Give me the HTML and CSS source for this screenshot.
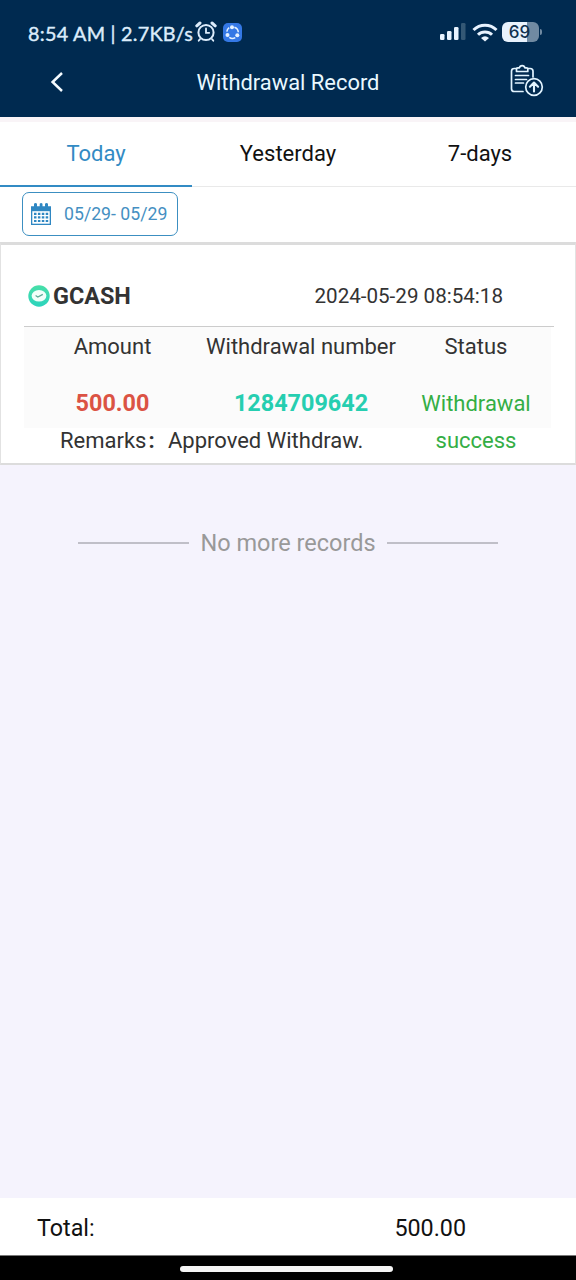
FILE: index.html
```html
<!DOCTYPE html>
<html lang="en">
<head>
<meta charset="utf-8">
<title>Withdrawal Record</title>
<link rel="stylesheet" href="styles.css">
</head>
<body>
<div class="screen">
  <header class="top">
    <div class="status-bar">
      <span class="clock">8:54 AM | 2.7KB/s</span>
      <svg class="alarm" width="22" height="22" viewBox="0 0 22 22" fill="none" stroke="#dcecfb" stroke-linecap="round">
        <circle cx="11" cy="11.5" r="7.6" stroke-width="2"/>
        <path d="M11 7.5v4.3h3.2" stroke-width="1.8"/>
        <path d="M1.8 4.8 5 2M20.2 4.8 17 2" stroke-width="3"/>
        <path d="M5 18.2l-1.3 1.5M17 18.2l1.3 1.5" stroke-width="1.8"/>
      </svg>
      <svg class="share" width="19" height="19" viewBox="0 0 19 19">
        <rect width="19" height="19" rx="5" fill="#3478e5"/>
        <g fill="none" stroke="#e4f1ff" stroke-width="1.5"><path d="M6.2 4.7a5.7 5.7 0 0 0-2.4 4M11.4 4.2a5.7 5.7 0 0 1 3.9 5M6.3 14.4a5.7 5.7 0 0 0 6 .2"/></g>
        <g fill="#e4f1ff"><circle cx="9" cy="4.3" r="2"/><circle cx="4.5" cy="11.9" r="2"/><circle cx="14.3" cy="12.2" r="2"/></g>
      </svg>
      <span class="spacer"></span>
      <svg class="signal" width="26" height="18" viewBox="0 0 26 18" fill="#e8f3ff">
        <rect x="0" y="11" width="4.5" height="6" rx="1.3"/><rect x="7" y="8" width="4.5" height="9" rx="1.3"/><rect x="14" y="4" width="4.5" height="13" rx="1.3"/><rect x="21" y="0" width="4.5" height="17" rx="1.3" fill="#345875"/>
      </svg>
      <svg class="wifi" width="26" height="19" viewBox="0 0 26 19" fill="none" stroke="#e8f3ff" stroke-width="3">
        <path d="M1.5 7A16.3 16.3 0 0 1 24.5 7"/><path d="M6 11.8a10 10 0 0 1 14 0"/>
        <path d="M9 15Q13 11.5 17 15L13 18.6Z" fill="#e8f3ff" stroke="none"/>
      </svg>
      <span class="battery">69</span><span class="battery-tip"></span>
    </div>
    <div class="title-bar">
      <svg class="back" width="14" height="22" viewBox="0 0 14 22" fill="none" stroke="#f4fbff" stroke-width="2.5"><path d="M12 2 2.6 11 12 20"/></svg>
      <h1 class="title">Withdrawal Record</h1>
      <svg class="report" width="34" height="33" viewBox="0 0 34 33" fill="none" stroke="#e2f4ff" stroke-width="1.7" stroke-linecap="round" stroke-linejoin="round">
        <path d="M6.5 4.5H4.3Q1.5 4.5 1.5 7.3V24.7Q1.5 27.5 4.3 27.5H13M17.8 4.5h2.4Q23 4.5 23 7.3V13"/>
        <path d="M6.5 7.5V5.1q0-1.2 1.3-1.2h1.6a2.8 2.8 0 0 1 5.5 0h1.6q1.3 0 1.3 1.2v2.4Z"/>
        <path d="M5.5 11.5h13M5.5 15.5h11M5.5 19h8"/>
        <circle cx="24" cy="23" r="8.3" fill="#002a50"/>
        <path d="M24 27.5v-8.8M19.9 22.7l4.1-4.1 4.1 4.1" stroke-width="2.1"/>
      </svg>
    </div>
  </header>
  <nav class="tabs">
    <span class="tab active">Today</span><span class="tab">Yesterday</span><span class="tab">7-days</span>
  </nav>
  <div class="filter">
    <div class="date">
      <svg width="20" height="22" viewBox="0 0 20 22">
        <path fill="#2f87c2" d="M0 3.2h3V.8Q4.5-.6 6 .8v2.4h2.7V.8q1.4-1.4 2.8 0v2.4H14V.8q1.5-1.4 3 0v2.4h3V22H0Z"/>
        <path fill="#fff" d="M1.3 8.2h17.4v12.5H1.3Z"/>
        <path stroke="#2f87c2" stroke-width="2.2" stroke-dasharray="2.5 1.4" d="M3 10.8h14.4M3 14.4h14.4M3 18h14.4"/>
      </svg>
      <span class="range">05/29- 05/29</span>
    </div>
  </div>
  <section class="card">
    <div class="card-head">
      <svg width="22" height="22" viewBox="0 0 22 22"><defs><linearGradient id="mint" x2="0" y2="1"><stop stop-color="#48dfa8"/><stop offset="1" stop-color="#2bd3bd"/></linearGradient></defs><circle cx="11" cy="11" r="10.7" fill="url(#mint)"/><ellipse cx="11" cy="10.8" rx="7.4" ry="5.8" fill="#f1fffa"/><path d="m7.6 10.6 2.2 1.5 5-2.7" fill="none" stroke="#5ca996" stroke-width="1.2"/></svg>
      <strong class="bank">GCASH</strong>
      <time class="time">2024-05-29 08:54:18</time>
    </div>
    <div class="grid">
      <span>Amount</span><span>Withdrawal number</span><span>Status</span>
      <strong class="amount">500.00</strong><strong class="number">1284709642</strong><span class="state">Withdrawal success</span>
    </div>
    <div class="remarks"><span class="remark-label">Remarks<span class="colon">:</span></span><span class="remark-text">Approved Withdraw.</span></div>
  </section>
  <main class="rest">
    <div class="end"><span class="rule"></span><span>No more records</span><span class="rule"></span></div>
  </main>
  <footer class="total"><span>Total:</span><span>500.00</span></footer>
  <div class="home"><span class="pill"></span></div>
</div>
</body>
</html>
```
FILE: styles.css
```css
* { box-sizing: border-box; }
body { margin: 0; font-family: Roboto, "Noto Sans", sans-serif; color: #333; }
svg { display: block; flex: none; }
.screen { width: 576px; height: 1280px; display: flex; flex-direction: column; overflow: hidden; background: #f5f3fd; }
.top { height: 117px; flex: none; background: #002a50; }
.status-bar { height: 53px; padding: 11px 34px 0 28px; display: flex; align-items: center; }
.clock { font: 400 19.8px/24px Lato, sans-serif; letter-spacing: .25px; -webkit-text-stroke: .4px #dcecfb; color: #dcecfb; white-space: nowrap; width: 167px; padding-top: 2px; }
.alarm { margin-top: -1px; }
.share { margin-left: 6px; }
.spacer { flex: 1; }
.wifi { margin: 0 4px 0 6px; }
.battery { width: 37px; height: 20px; border-radius: 6px; background: linear-gradient(90deg, #e8f2fd 67%, #708aa2 67%); color: #10314f; font: 500 17px/20px Inter, sans-serif; text-align: center; padding-right: 2px; }
.battery-tip { width: 2px; height: 6px; margin-left: 1px; border-radius: 0 2px 2px 0; background: #708aa2; }
.title-bar { height: 58px; padding: 0 32px 0 50px; display: grid; grid-template-columns: 36px 1fr 34px; align-items: center; }
.title { margin: 1px 20px 0 0; font-size: 21.9px; font-weight: 400; line-height: 28px; text-align: center; color: #e9f8ff; }
.report { margin-top: -4px; }
.tabs { height: 70px; flex: none; display: grid; grid-template-columns: repeat(3, 1fr); background: #fff; border-top: 5px solid #f9f4f7; }
.tab { border-bottom: 2px solid #e9e9e9; text-align: center; font-size: 22px; line-height: 63px; color: #111; }
.tab.active { color: #328bc4; border-bottom: 3px solid #328bc4; }
.filter { height: 55px; flex: none; padding: 5px 22px; background: #fff; }
.date { width: 156px; height: 44px; padding-left: 8px; border: 1px solid #3c8fc1; border-radius: 7px; display: flex; align-items: center; gap: 13px; }
.range { font-size: 17.7px; color: #458fc2; white-space: nowrap; margin-top: -1px; }
.card { height: 223px; flex: none; padding: 4px 21px 0 23px; background: #fff; border: 1px solid #e2e2e2; border-top: 3px solid #dcdcdc; border-bottom: 2px solid #dcdcdc; }
.card-head { height: 78px; padding: 17px 51px 0 4px; border-bottom: 1px solid #ccc; display: flex; align-items: center; }
.bank { margin-left: 3px; font-size: 23.4px; }
.time { margin-left: auto; font-size: 20.6px; }
.grid { height: 101px; margin-right: 3px; background: #fbfbfb; display: grid; grid-template-columns: 177px 200px 1fr; grid-template-rows: 57px 43px; text-align: center; font-size: 22px; line-height: 37px; padding-top: 1px; }
.amount, .number { font-size: 23.4px; }
.amount { color: #db5344; }
.number { color: #26ceb0; }
.state { color: #34ae45; padding: 0 10px; }
.remarks { height: 29px; display: flex; font-size: 22px; line-height: 25px; }
.remark-label { padding-left: 36px; width: 144px; }
.colon { font-weight: 700; margin-left: 2px; }
.rest { flex: 1; padding: 64px 78px; }
.end { display: flex; align-items: center; justify-content: space-between; font-size: 23.5px; line-height: 28px; color: #999; }
.rule { width: 111px; height: 2px; background: #c0bfc8; }
.total { height: 58px; flex: none; background: #fff; border-bottom: 1px solid #777; padding: 0 110px 0 37px; display: flex; justify-content: space-between; font-size: 23.3px; line-height: 60px; color: #111; }
.home { height: 24px; flex: none; background: #000; display: flex; align-items: center; justify-content: center; }
.pill { width: 213px; height: 6px; border-radius: 3px; background: #f5f5f5; margin: 1px 4px 0 0; }
```
